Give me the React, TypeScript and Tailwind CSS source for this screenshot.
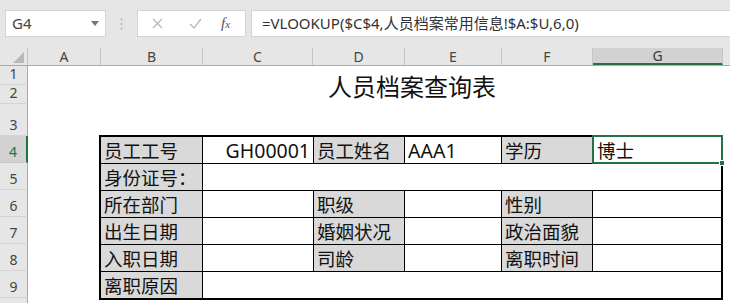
import React from 'react';

const FONT = { fontFamily: '"Noto Sans", "Noto Sans CJK SC", sans-serif' };

const cols = [
  { key: 'A', w: 'w-[73px]' },
  { key: 'B', w: 'w-[102px]' },
  { key: 'C', w: 'w-[110px]' },
  { key: 'D', w: 'w-[92px]' },
  { key: 'E', w: 'w-[97px]' },
  { key: 'F', w: 'w-[91px]' },
  { key: 'G', w: 'w-[130px]' },
];

const rowHeads = [
  { n: '1', h: 'h-[19px]' },
  { n: '2', h: 'h-[19px]' },
  { n: '3', h: 'h-[32px]' },
  { n: '4', h: 'h-[27px]' },
  { n: '5', h: 'h-[27px]' },
  { n: '6', h: 'h-[27px]' },
  { n: '7', h: 'h-[27px]' },
  { n: '8', h: 'h-[27px]' },
  { n: '9', h: 'h-[27px]' },
  { n: '', h: 'h-[27px]' },
];

function Label({ children }: { children?: React.ReactNode }) {
  return <div className="bg-[#d9d9d9] h-[26px] flex items-center pl-[3px] pt-[1px] text-[18.5px] text-[#111] whitespace-nowrap">{children}</div>;
}

function Value({ children, right, span }: { children?: React.ReactNode; right?: boolean; span?: boolean }) {
  return (
    <div
      className={`bg-white h-[26px] flex items-center pt-[1px] text-[19.5px] text-[#111] whitespace-nowrap ${right ? 'justify-end pr-[3px]' : 'pl-[3px]'} ${span ? 'col-span-5' : ''}`}
    >
      {children}
    </div>
  );
}

export default function App() {
  return (
    <div className="w-[730px] h-[303px] overflow-hidden bg-white" style={FONT}>
      {/* formula bar */}
      <div className="h-[48px] bg-[#e6e6e6] flex items-start pt-[10px] pl-[5px]">
        <div className="w-[101px] h-[27px] bg-white border border-[#d4d4d4] flex items-center justify-between pl-[6px] pr-[6px]">
          <span className="text-[15px] text-[#444]">G4</span>
          <svg width="8" height="5" viewBox="0 0 8 5"><path d="M0 0h8L4 5z" fill="#777" /></svg>
        </div>
        <div className="w-[31px] h-[27px] flex items-center justify-center">
          <svg width="3" height="12" viewBox="0 0 3 12">
            <circle cx="1.5" cy="1.5" r="1" fill="#b5b5b5" />
            <circle cx="1.5" cy="6" r="1" fill="#b5b5b5" />
            <circle cx="1.5" cy="10.5" r="1" fill="#b5b5b5" />
          </svg>
        </div>
        <div className="w-[109px] h-[27px] bg-white border border-[#d4d4d4] flex items-center pl-[14px]">
          <svg width="11" height="11" viewBox="0 0 11 11"><path d="M1 1l9 9M10 1l-9 9" stroke="#b8b8b8" strokeWidth="1.3" /></svg>
          <svg className="ml-[26px]" width="13" height="11" viewBox="0 0 13 11"><path d="M1 6l4 4 7-9" stroke="#b8b8b8" strokeWidth="1.3" fill="none" /></svg>
          <span className="ml-[19px] text-[15px] italic text-[#555]" style={{ fontFamily: '"Liberation Serif", serif' }}>
            f<span className="text-[11px]">x</span>
          </span>
        </div>
        <div className="ml-[5px] flex-1 h-[27px] bg-white border border-[#d4d4d4] border-r-0 flex items-center pl-[10px] text-[15px] text-[#333] whitespace-nowrap">
          =VLOOKUP($C$4,人员档案常用信息!$A:$U,6,0)
        </div>
      </div>

      {/* column headers */}
      <div className="flex h-[18px] bg-[#e6e6e6] border-b border-[#ababab]">
        <div className="w-[28px] h-full relative border-r border-[#c6c6c6]">
          <svg className="absolute right-[3px] bottom-[2px]" width="11" height="11" viewBox="0 0 11 11"><path d="M11 0v11H0z" fill="#b8b8b8" /></svg>
        </div>
        {cols.map((c) =>
          c.key === 'G' ? (
            <div key={c.key} className={`${c.w} h-full bg-[#d2d2d2] border-b-2 border-[#217346] border-r border-r-[#c6c6c6] flex items-center justify-center text-[14px] text-[#3a3a3a] leading-none`}>
              {c.key}
            </div>
          ) : (
            <div key={c.key} className={`${c.w} h-full border-r border-[#c6c6c6] flex items-center justify-center text-[14px] text-[#444] leading-none`}>
              {c.key}
            </div>
          )
        )}
        <div className="flex-1" />
      </div>

      {/* body */}
      <div className="flex">
        <div className="w-[28px] flex flex-col shrink-0">
          {rowHeads.map((r, i) =>
            r.n === '4' ? (
              <div key={i} className={`${r.h} bg-[#d2d2d2] border-r-2 border-[#217346] border-b border-b-[#c6c6c6] flex items-end justify-center pb-[3px] text-[14px] text-[#217346] leading-none`}>
                {r.n}
              </div>
            ) : (
              <div key={i} className={`${r.h} bg-[#e6e6e6] border-r border-[#ababab] border-b border-b-[#d4d4d4] flex items-end justify-center pb-[3px] text-[14px] text-[#444] leading-none`}>
                {r.n}
              </div>
            )
          )}
        </div>

        <div className="flex-1 flex flex-col">
          <div className="h-[38px] ml-[73px] w-[622px] flex items-center justify-center text-[24px] text-[#111] leading-none pt-[4px]">
            人员档案查询表
          </div>
          <div className="h-[31px]" />
          <div className="ml-[71px] w-[624px] border-2 border-black bg-black grid grid-cols-[101px_110px_90px_96px_90px_128px] gap-px">
            <Label>员工工号</Label>
            <Value right>GH00001</Value>
            <Label>员工姓名</Label>
            <Value>AAA1</Value>
            <Label>学历</Label>
            <div className="relative bg-white h-[26px] flex items-center pl-[4px] pt-[1px] text-[18.5px] text-[#111]">
              博士
              <div className="absolute -left-[1px] -top-[2px] -right-[2px] -bottom-[1px] border-2 border-[#217346]" />
              <div className="absolute -right-[4px] -bottom-[3px] w-[6px] h-[6px] bg-[#217346] border border-white" />
            </div>

            <Label>身份证号：</Label>
            <Value span />

            <Label>所在部门</Label>
            <Value />
            <Label>职级</Label>
            <Value />
            <Label>性别</Label>
            <Value />

            <Label>出生日期</Label>
            <Value />
            <Label>婚姻状况</Label>
            <Value />
            <Label>政治面貌</Label>
            <Value />

            <Label>入职日期</Label>
            <Value />
            <Label>司龄</Label>
            <Value />
            <Label>离职时间</Label>
            <Value />

            <Label>离职原因</Label>
            <Value span />
          </div>
        </div>
      </div>
    </div>
  );
}
